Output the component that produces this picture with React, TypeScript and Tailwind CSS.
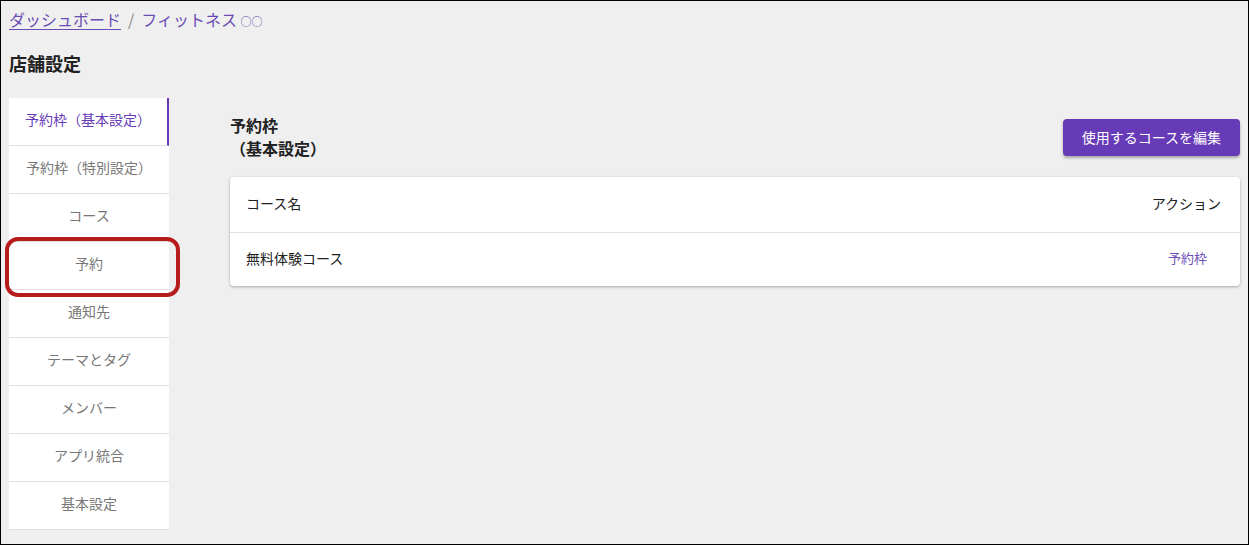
import React from 'react'

const menu = [
  '予約枠（基本設定）',
  '予約枠（特別設定）',
  'コース',
  '予約',
  '通知先',
  'テーマとタグ',
  'メンバー',
  'アプリ統合',
  '基本設定',
]

export default function App() {
  return (
    <div
      className="relative h-[545px] w-[1249px] overflow-hidden border border-black bg-[#efefef] text-[#212121]"
      style={{ fontFamily: '"Noto Sans CJK JP", "Noto Sans", sans-serif' }}
    >
      <div className="px-2">
        <nav className="flex h-[36px] items-center gap-[7px] text-[16px] text-[#6a4bb5]">
          <a className="underline decoration-1 underline-offset-[3px]" href="#">
            ダッシュボード
          </a>
          <span className="text-[#888]">/</span>
          <span>
            フィットネス <span className="text-[11px]">○○</span>
          </span>
        </nav>
        <h1 className="mt-[9px] text-[18px] font-bold leading-[34px]">店舗設定</h1>

        <div className="mt-[18px] flex">
          <ul className="w-[160px] shrink-0">
            {menu.map((label, i) => (
              <li
                key={label}
                className={
                  'flex h-12 items-center justify-center border-b border-[#e0e0e0] bg-white pb-[4px] text-[14px] ' +
                  (i === 0 ? 'border-r-2 border-r-[#673ab7] text-[#673ab7]' : 'text-[#777]')
                }
              >
                {label}
              </li>
            ))}
          </ul>

          <main className="ml-[61px] flex-1">
            <div className="flex items-start justify-between pt-[16px]">
              <h2 className="text-[16px] font-bold leading-[23px]">
                予約枠
                <br />
                （基本設定）
              </h2>
              <button className="mt-[5px] h-[37px] rounded bg-[#673ab7] px-[19px] text-[14px] text-white shadow-[0_2px_3px_rgba(0,0,0,0.3)]">
                使用するコースを編集
              </button>
            </div>

            <div className="mt-[17px] rounded bg-white shadow-[0_1px_3px_rgba(0,0,0,0.3)]">
              <div className="flex h-[56px] items-center justify-between border-b border-[#e0e0e0] px-4 pb-[2px] text-[14px]">
                <span>コース名</span>
                <span className="pr-[3px]">アクション</span>
              </div>
              <div className="flex h-[53px] items-center justify-between px-4 pb-[3px] text-[14px]">
                <span>無料体験コース</span>
                <button className="pl-[14px] pr-[17px] text-[13px] text-[#6b4fb8]">予約枠</button>
              </div>
            </div>
          </main>
        </div>
      </div>

      <div className="pointer-events-none absolute left-[4px] top-[236px] h-[60px] w-[175px] rounded-[13px] border-4 border-[#b71c1c]" />
    </div>
  )
}
